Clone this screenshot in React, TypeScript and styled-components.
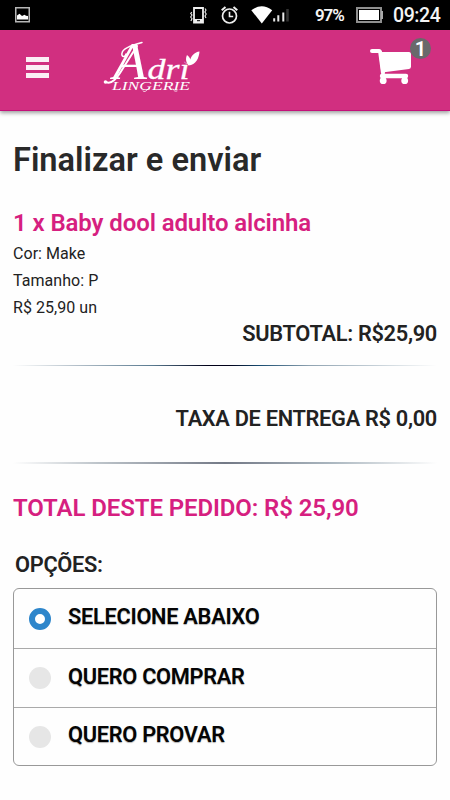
import React from "react";
import styled, { createGlobalStyle } from "styled-components";

const GlobalStyle = createGlobalStyle`
  * { box-sizing: border-box; }
  html, body { margin: 0; padding: 0; background: #fefefe; }
  body { font-family: Roboto, "Liberation Sans", sans-serif; color: #222; }
  h1, h2, h3, p, ul { margin: 0; padding: 0; }
`;

const Screen = styled.div`
  width: 450px;
  height: 800px;
  overflow: hidden;
  background: #fefefe;
`;

const StatusBar = styled.div`
  height: 30px;
  padding: 0 9px 0 15px;
  background: #000;
  color: #f4f4f4;
  display: flex;
  align-items: center;
  svg { display: block; flex: none; }
`;

const StatusGroup = styled.div`
  margin-left: auto;
  display: flex;
  align-items: center;
`;

const AlarmSlot = styled.span`
  margin: 0 13px 0 14px;
`;

const Percent = styled.span`
  width: 29px;
  margin: 0 12px 0 24px;
  font-size: 17px;
  font-weight: 600;
  letter-spacing: -1.1px;
  line-height: 30px;
  white-space: nowrap;
`;

const Clock = styled.span`
  width: 48px;
  margin: 2px 0 0 9px;
  font-size: 19.5px;
  font-weight: 500;
  letter-spacing: -0.4px;
  line-height: 30px;
  white-space: nowrap;
`;

const Header = styled.header`
  height: 81px;
  padding: 0 11px 0 26px;
  background: #d12f80;
  border-bottom: 1px solid #c5107a;
  box-shadow: 0 2px 4px rgba(0, 0, 0, 0.38);
  display: flex;
  align-items: flex-start;
  svg { display: block; }
`;

const MenuButton = styled.button`
  width: 23px;
  height: 21px;
  margin-top: 27px;
  padding: 0;
  border: 0;
  background: none;
  display: flex;
  flex-direction: column;
  justify-content: space-between;
`;

const MenuLine = styled.span`
  display: block;
  height: 5px;
  background: #fbeef5;
`;

const LogoLink = styled.div`
  margin-left: 51px;
`;

const Cart = styled.div`
  position: relative;
  width: 70px;
  height: 60px;
  margin-left: auto;
  padding: 18px 0 0 1px;
`;

const CartBadge = styled.span`
  position: absolute;
  top: 8px;
  right: 8px;
  width: 21px;
  height: 21px;
  border-radius: 50%;
  background: #69696b;
  color: #fff;
  font-size: 20px;
  font-weight: 600;
  line-height: 23px;
  text-align: center;
`;

const Content = styled.main`
  padding: 29.5px 13px 0;
`;

const Title = styled.h1`
  font-size: 32.6px;
  font-weight: 600;
  line-height: 38px;
  color: #292929;
  white-space: nowrap;
`;

const PinkHeading = styled.h2<{ $top: number }>`
  margin-top: ${(p) => p.$top}px;
  font-size: 24px;
  font-weight: 600;
  line-height: 28px;
  letter-spacing: -0.1px;
  color: #d61f80;
  white-space: nowrap;
`;

const Details = styled.div`
  margin-top: 2.5px;
  height: 83px;
  font-size: 16px;
  letter-spacing: 0.05px;
  line-height: 27.4px;
  color: #222;
`;

const Amount = styled.p<{ $top: number }>`
  margin-top: ${(p) => p.$top}px;
  font-size: 21.8px;
  font-weight: 600;
  line-height: 22px;
  letter-spacing: -0.31px;
  text-align: right;
  white-space: nowrap;
`;

const Divider = styled.div<{ $top: number; $soft?: boolean }>`
  height: ${(p) => (p.$soft ? 2 : 1)}px;
  margin-top: ${(p) => p.$top}px;
  background: linear-gradient(
    to right,
    transparent,
    #b3bfc9 15%,
    #58798f 33%,
    #000018 46%,
    #000018 51%,
    #174b70 58%,
    #90a3b1 70%,
    #c3ced6 85%,
    transparent
  );
  ${(p) =>
    p.$soft &&
    "background: linear-gradient(to right, transparent, #bdc4ca 20%, #737986 50%, #aab6bf 75%, transparent);"}
`;

const OptionsTitle = styled.h3`
  margin: 31.5px 0 0 2px;
  font-size: 21.8px;
  font-weight: 600;
  line-height: 22px;
  letter-spacing: -0.3px;
`;

const Options = styled.div`
  margin-top: 12px;
  border: 1px solid #999;
  border-radius: 6px;
  overflow: hidden;
`;

const Option = styled.label`
  height: 59px;
  padding: 0 15px 2px;
  display: flex;
  align-items: center;
  font-size: 21.8px;
  font-weight: 600;
  line-height: 22px;
  letter-spacing: -0.3px;
  color: #050505;
  text-shadow: 0 1px 1px rgba(0, 0, 0, 0.3);
  & + & { border-top: 1px solid #aaa; }
  &:last-child { height: 58px; }
`;

const Radio = styled.span<{ $checked?: boolean }>`
  width: 22px;
  height: 22px;
  margin: 3px 17px 0 0;
  border-radius: 50%;
  border: ${(p) => (p.$checked ? "6px solid #2e86cb" : "0")};
  background: ${(p) => (p.$checked ? "#fff" : "#e6e6e6")};
`;

const PictureIcon = () => (
  <svg width="15" height="16" viewBox="0 0 15 16">
    <rect x=".75" y=".75" width="13.5" height="14" fill="none" stroke="#b7b7b7" strokeWidth="1.5" />
    <path d="M2 12.5V8.5L4.5 6.8L7 9L9.5 7.7L11 8.8L13 9V12.5Z" fill="#fff" />
  </svg>
);

const VibrateIcon = () => (
  <svg width="17" height="17" viewBox="0 0 17 17" fill="none" stroke="#eee">
    <path d="M4 1H13V15.5H4Z" strokeWidth="1.8" />
    <path d="M4 13.5H13" strokeWidth="3" />
    <path d="M7 13.7H10" stroke="#000" strokeWidth="1" />
    <path d="M1.8 5L.7 6.4L2 8L.7 10L2 11.7L.9 14M15 1.5L16 3L14.9 5L16.2 7L15 9L16 11" strokeWidth="1.1" />
  </svg>
);

const AlarmIcon = () => (
  <svg width="17" height="18" viewBox="0 0 17 18" fill="none" stroke="#eee">
    <circle cx="8.5" cy="10" r="7" strokeWidth="1.7" />
    <path d="M8.5 5.7V10.5H12.2" strokeWidth="1.6" />
    <path d="M.7 4.2L4.5 1M12.5 1L16.3 4.2" strokeWidth="2" />
  </svg>
);

const SignalIcon = () => (
  <svg width="40" height="18" viewBox="0 0 40 18">
    <path d="M.3 4.2Q10.7-3.8 21.2 4.2L10.8 17.5Z" fill="#fff" />
    <path d="M23.2 12.2V15.5M27.3 9.3V15.5M32.3 6.5V15.5" stroke="#e7e7e7" strokeWidth="2" />
    <path d="M36.5 3V15.5" stroke="#333" strokeWidth="2.5" />
  </svg>
);

const BatteryIcon = () => (
  <svg width="28" height="16" viewBox="0 0 28 16">
    <rect x="1" y="1" width="24" height="14" fill="none" stroke="#8f8f8f" strokeWidth="2" />
    <rect x="3" y="3" width="20" height="10" fill="#fff" />
    <path d="M26 4V12" stroke="#aaa" strokeWidth="2" />
  </svg>
);

const Logo = () => (
  <svg width="100" height="75" viewBox="100 30 100 75" fill="#fff">
    <g fontFamily="'Liberation Serif', serif" fontStyle="italic">
      <text x="113" y="79" fontSize="53" textLength="34" lengthAdjust="spacingAndGlyphs">A</text>
      <text x="147.5" y="79" fontSize="30" textLength="42" lengthAdjust="spacingAndGlyphs" stroke="#fff" strokeWidth=".3">dri</text>
      <text x="112" y="89.5" fontSize="13.5" textLength="78" lengthAdjust="spacingAndGlyphs">LINGERIE</text>
    </g>
    <g fill="none" stroke="#fff" strokeLinecap="round">
      <path d="M142 42.5C132 45 123 48 122 53C121 57 125 58 126 54" strokeWidth="1.5" />
      <path d="M137 46L120 73C115 81 110 84 106 82" strokeWidth="2" />
      <path d="M148 89Q145 93 143 91M173 89Q174 92 177 91" strokeWidth=".8" />
    </g>
    <circle cx="105.5" cy="82" r="1.8" />
    <circle cx="186.5" cy="60.5" r="2.5" fill="#d12f80" />
    <path d="M188.5 65.5C185 61 186 57.5 187 55C190 57 191 60 190 62C190 56 195 52 199.5 51.5C199 58 196 65 188.5 65.5Z" />
  </svg>
);

const CartIcon = () => (
  <svg width="42" height="37" viewBox="0 0 42 37" fill="#fff">
    <path d="M2 3H9Q10 3 10.3 5L13 25" fill="none" stroke="#fff" strokeWidth="4" strokeLinecap="round" strokeLinejoin="round" />
    <path d="M9.5 4H39Q41 4 41 6V18.5Q41 20.5 39 21L14 24.2L11 22L9.5 10Z" />
    <path d="M12 28H36" stroke="#fff" strokeWidth="4.4" strokeLinecap="round" />
    <circle cx="13.2" cy="32.7" r="3.4" />
    <circle cx="34.7" cy="32.7" r="3.4" />
  </svg>
);

const choices = ["SELECIONE ABAIXO", "QUERO COMPRAR", "QUERO PROVAR"];

export default function App() {
  return (
    <Screen>
      <GlobalStyle />
      <StatusBar>
        <PictureIcon />
        <StatusGroup>
          <VibrateIcon />
          <AlarmSlot><AlarmIcon /></AlarmSlot>
          <SignalIcon />
          <Percent>97%</Percent>
          <BatteryIcon />
          <Clock>09:24</Clock>
        </StatusGroup>
      </StatusBar>
      <Header>
        <MenuButton aria-label="Menu">
          <MenuLine />
          <MenuLine />
          <MenuLine />
        </MenuButton>
        <LogoLink><Logo /></LogoLink>
        <Cart>
          <CartIcon />
          <CartBadge>1</CartBadge>
        </Cart>
      </Header>
      <Content>
        <Title>Finalizar e enviar</Title>
        <PinkHeading $top={30.5}>1 x Baby dool adulto alcinha</PinkHeading>
        <Details>
          <p>Cor: Make</p>
          <p>Tamanho: P</p>
          <p>R$ 25,90 un</p>
        </Details>
        <Amount $top={0.5}>SUBTOTAL: R$25,90</Amount>
        <Divider $top={20} />
        <Amount $top={42}>TAXA DE ENTREGA R$ 0,00</Amount>
        <Divider $top={32} $soft />
        <PinkHeading $top={30}>TOTAL DESTE PEDIDO: R$ 25,90</PinkHeading>
        <OptionsTitle>OPÇÕES:</OptionsTitle>
        <Options>
          {choices.map((choice, i) => (
            <Option key={choice}>
              <Radio $checked={i === 0} />
              {choice}
            </Option>
          ))}
        </Options>
      </Content>
    </Screen>
  );
}
